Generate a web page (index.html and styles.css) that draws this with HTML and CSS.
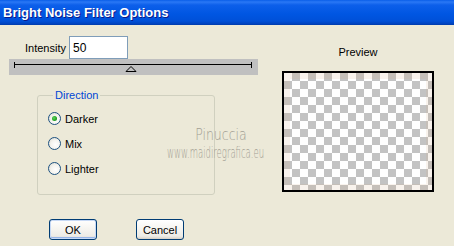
FILE: index.html
```html
<!DOCTYPE html>
<html lang="en">
<head>
    <meta charset="UTF-8">
    <title>Bright Noise Filter Options</title>
    <link rel="stylesheet" href="styles.css">
</head>
<body>
    <div class="window">
        <div class="titlebar">Bright Noise Filter Options</div>

        <div class="content">
            <div class="left-col">
                <div class="intensity-row">
                    <label for="intensity">Intensity</label>
                    <input type="text" id="intensity" value="50">
                </div>

                <div class="slider">
                    <svg width="249" height="16" viewBox="0 0 249 16">
                        <line x1="5" y1="5.5" x2="243" y2="5.5" stroke="#000" stroke-width="1"/>
                        <line x1="5.5" y1="3" x2="5.5" y2="9" stroke="#000" stroke-width="1"/>
                        <line x1="242.5" y1="3" x2="242.5" y2="9" stroke="#000" stroke-width="1"/>
                        <polygon points="122,7.5 117,12.5 127,12.5" fill="#c0c0c0" stroke="#000" stroke-width="1"/>
                    </svg>
                </div>

                <fieldset class="direction">
                    <legend>Direction</legend>
                    <div class="radio-row">
                        <span class="radio checked"></span>
                        <span>Darker</span>
                    </div>
                    <div class="radio-row">
                        <span class="radio"></span>
                        <span>Mix</span>
                    </div>
                    <div class="radio-row">
                        <span class="radio"></span>
                        <span>Lighter</span>
                    </div>
                </fieldset>

                <div class="buttons">
                    <button class="default">OK</button>
                    <button>Cancel</button>
                </div>
            </div>

            <div class="right-col">
                <p class="preview-label">Preview</p>
                <div class="preview-box">
                    <div class="preview-tint"></div>
                </div>
            </div>
        </div>

        <!-- watermark over the dialog -->
        <div class="watermark">
            <span class="wm-name">Pinuccia</span>
            <span class="wm-site">www.maidiregrafica.eu</span>
        </div>
    </div>
</body>
</html>
```

FILE: styles.css
```css
body {
    margin: 0;
    background-color: #ECE9D8;
    font-family: "Liberation Sans", Arial, sans-serif;
    font-size: 11px;
    color: #000;
}

.window {
    width: 454px;
    height: 246px;
    overflow: hidden;
    position: relative;
}

.titlebar {
    height: 25px;
    line-height: 25px;
    padding-left: 3px;
    color: #fff;
    font-weight: bold;
    font-size: 13px;
    text-shadow: 1px 1px #0a1a8a;
    background: linear-gradient(to bottom, #0a5ee8 0, #2a78f5 2px, #0d5fea 5px, #0056e2 14px, #0050d8 21px, #0042bd 24px, #003aa8 25px);
}

.content {
    display: flex;
}

.left-col {
    width: 282px;
}

.intensity-row {
    display: flex;
    align-items: center;
    gap: 3px;
    padding-left: 25px;
    margin-top: 11px;
}

.intensity-row input {
    width: 59px;
    height: 23px;
    box-sizing: border-box;
    border: 1px solid #7F9DB9;
    padding: 0 0 0 3px;
    font-family: inherit;
    font-size: 12px;
    outline: none;
}

.slider {
    margin-left: 9px;
    width: 249px;
    height: 16px;
    background-color: #C0C0C0;
}

.slider svg {
    display: block;
}

.direction {
    margin: 14px 0 0 37px;
    width: 178px;
    height: 106px;
    box-sizing: border-box;
    padding: 4px 0 0 10px;
    border: 1px solid #D0D0BF;
    border-radius: 3px;
}

.direction legend {
    color: #0046D5;
    padding: 0 2px;
    margin-left: 5px;
    line-height: 13px;
}

.radio-row {
    display: flex;
    align-items: center;
    gap: 4px;
    height: 25px;
}

.radio {
    width: 11px;
    height: 11px;
    border: 1px solid #1C5180;
    border-radius: 50%;
    background: radial-gradient(circle at 60% 60%, #fff 0, #f4f3ee 50%, #d8d6cb 100%);
    position: relative;
}

.radio.checked::after {
    content: "";
    position: absolute;
    left: 3px;
    top: 3px;
    width: 5px;
    height: 5px;
    border-radius: 50%;
    background: radial-gradient(circle at 40% 40%, #5fd35f 0, #21a121 60%, #1a7e1a 100%);
}

.buttons {
    display: flex;
    gap: 39px;
    margin: 24px 0 0 49px;
}

button {
    width: 48px;
    height: 21px;
    padding: 0;
    font-family: inherit;
    font-size: 11px;
    color: #000;
    border: 1px solid #003C74;
    border-radius: 3px;
    background: linear-gradient(to bottom, #fff 0, #f7f6f2 40%, #ecebe6 85%, #d6d0c5 100%);
}

button.default {
    box-shadow: inset 0 0 0 1px #c7d9f5, inset 0 -1px 0 1px #97b5e8;
}

.right-col {
    width: 152px;
}

.preview-label {
    margin: 21px 0 0;
    line-height: 13px;
    text-align: center;
}

.preview-box {
    margin-top: 12px;
    width: 152px;
    height: 121px;
    box-sizing: border-box;
    border: 2px solid #000;
    background: repeating-conic-gradient(#c3c3c3 0 25%, #fff 0 50%) 0 0 / 16px 16px;
}

.preview-tint {
    height: 100%;
    box-shadow: inset 0 0 0 6px rgba(215, 170, 130, 0.14);
}

.watermark {
    position: absolute;
    left: 160px;
    top: 126px;
    width: 112px;
    display: flex;
    flex-direction: column;
    align-items: center;
    color: #a39f94;
    font-family: "DejaVu Sans", sans-serif;
    font-weight: 200;
    font-size: 16px;
    line-height: 18px;
    pointer-events: none;
}

.watermark span {
    white-space: nowrap;
}

.wm-name {
    transform: scaleX(0.78);
    margin-left: 10px;
}

.wm-site {
    transform: scaleX(0.53);
}
```
